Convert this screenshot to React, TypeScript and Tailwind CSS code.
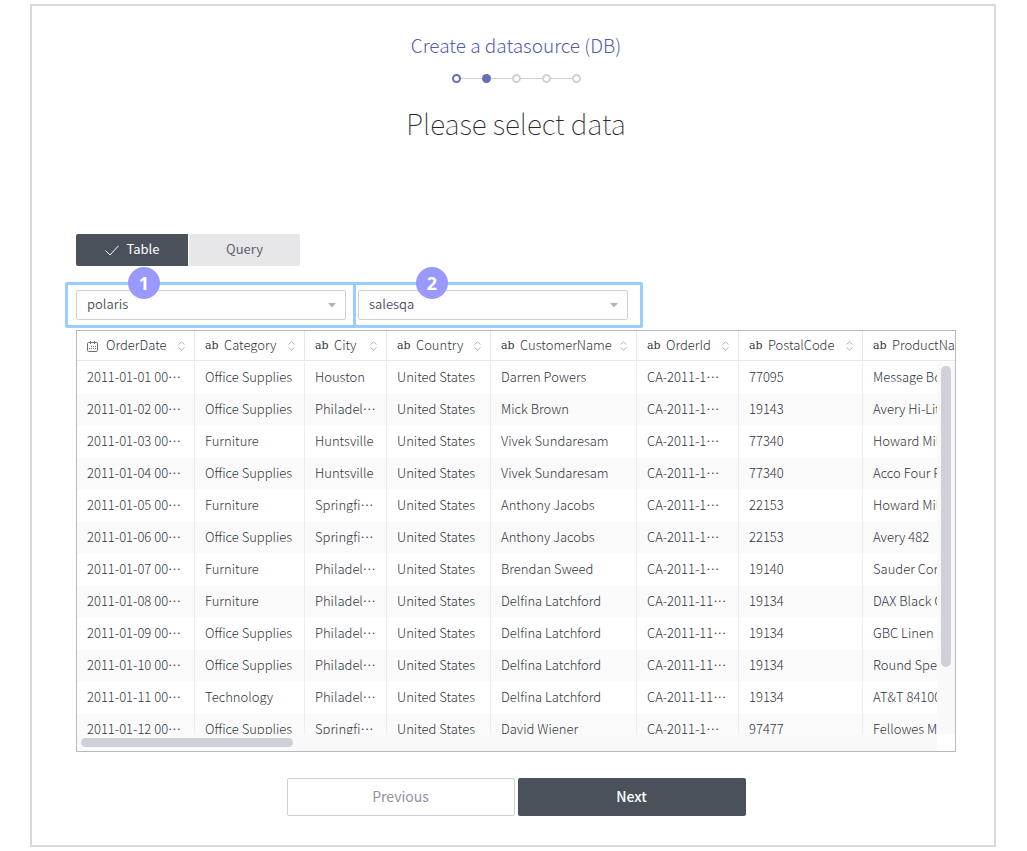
import { useState } from "react";
import type { ReactNode } from "react";

type Column = { name: string; kind: "date" | "text"; width: string };

const columns: Column[] = [
  { name: "OrderDate", kind: "date", width: "w-[118px]" },
  { name: "Category", kind: "text", width: "w-[110px]" },
  { name: "City", kind: "text", width: "w-[82px]" },
  { name: "Country", kind: "text", width: "w-[104px]" },
  { name: "CustomerName", kind: "text", width: "w-[146px]" },
  { name: "OrderId", kind: "text", width: "w-[102px]" },
  { name: "PostalCode", kind: "text", width: "w-[124px]" },
  { name: "ProductName", kind: "text", width: "w-[130px]" },
];

const US = "United States";
const MORE = "\u22ef";
const PHILADELPHIA = `Philadel${MORE}`;
const SPRINGFIELD = `Springfi${MORE}`;
const ORDER_1 = `CA-2011-1${MORE}`;
const ORDER_11 = `CA-2011-11${MORE}`;

const rows: string[][] = [
  ["2011-01-01", "Office Supplies", "Houston", US, "Darren Powers", ORDER_1, "77095", "Message Book"],
  ["2011-01-02", "Office Supplies", PHILADELPHIA, US, "Mick Brown", ORDER_1, "19143", "Avery Hi-Liter"],
  ["2011-01-03", "Furniture", "Huntsville", US, "Vivek Sundaresam", ORDER_1, "77340", "Howard Miller"],
  ["2011-01-04", "Office Supplies", "Huntsville", US, "Vivek Sundaresam", ORDER_1, "77340", "Acco Four Pocket"],
  ["2011-01-05", "Furniture", SPRINGFIELD, US, "Anthony Jacobs", ORDER_1, "22153", "Howard Miller"],
  ["2011-01-06", "Office Supplies", SPRINGFIELD, US, "Anthony Jacobs", ORDER_1, "22153", "Avery 482"],
  ["2011-01-07", "Furniture", PHILADELPHIA, US, "Brendan Sweed", ORDER_1, "19140", "Sauder Cornerstone"],
  ["2011-01-08", "Furniture", PHILADELPHIA, US, "Delfina Latchford", ORDER_11, "19134", "DAX Black Cherry"],
  ["2011-01-09", "Office Supplies", PHILADELPHIA, US, "Delfina Latchford", ORDER_11, "19134", "GBC Linen Binding"],
  ["2011-01-10", "Office Supplies", PHILADELPHIA, US, "Delfina Latchford", ORDER_11, "19134", "Round Specialty"],
  ["2011-01-11", "Technology", PHILADELPHIA, US, "Delfina Latchford", ORDER_11, "19134", "AT&T 841000"],
  ["2011-01-12", "Office Supplies", SPRINGFIELD, US, "David Wiener", ORDER_1, "97477", "Fellowes Mighty"],
].map(([date, ...rest]) => [`${date} 00${MORE}`, ...rest]);

function CalendarIcon() {
  return (
    <svg width="11" height="11" viewBox="0 0 11 11" fill="none" stroke="#6b7079" aria-hidden="true" className="mt-1 mr-px shrink-0">
      <rect x="0.5" y="1.5" width="10" height="9" rx="1" />
      <path d="M3.5 0v3M7.5 0v3" />
      <path d="M4 5.5h1M6 5.5h1M8 5.5h1M2 7.5h1M4 7.5h1M6 7.5h1M8 7.5h1" />
    </svg>
  );
}

function SortIcon() {
  return (
    <svg width="7" height="10" viewBox="0 0 7 10" fill="none" stroke="#b2b3bd" aria-hidden="true" className="mt-0.5 shrink-0">
      <path d="M0.5 3.5 3.5 0.8 6.5 3.5M0.5 6.5 3.5 9.2 6.5 6.5" />
    </svg>
  );
}

function CellText({ value }: { value: string }) {
  if (!value.endsWith(MORE)) return <>{value}</>;
  return (
    <>
      {value.slice(0, -1)}
      <span className="inline-block font-['Noto_Sans_CJK_JP',sans-serif]" lang="ja">
        {MORE}
      </span>
    </>
  );
}

function Stepper({ current }: { current: number }) {
  return (
    <ol className="mt-[17px] flex items-center justify-center" aria-label="Progress">
      {[0, 1, 2, 3, 4].map((step) => (
        <li key={step} className="flex items-center">
          {step > 0 && <span className="h-px w-[21px] bg-[#d0d1d8]" />}
          <span
            className={
              step < current
                ? "size-[9px] rounded-full border-2 border-[#666eb2]"
                : step === current
                  ? "size-[9px] rounded-full bg-[#666eb2]"
                  : "size-[9px] rounded-full border-2 border-[#d0d1d8]"
            }
          />
        </li>
      ))}
    </ol>
  );
}

function Badge({ children }: { children: ReactNode }) {
  return (
    <span className="absolute -top-[18px] left-[60px] flex size-8 items-center justify-center rounded-full bg-[#9999ff] font-['Open_Sans',sans-serif] text-lg font-bold text-white">
      {children}
    </span>
  );
}

function Picker({ label, value }: { label: string; value: string }) {
  return (
    <div className="relative w-[270px]">
      <select
        aria-label={label}
        defaultValue={value}
        className="block h-[30px] w-full appearance-none rounded-xs border border-[#d0d1d8] bg-white pr-8 pb-0.5 pl-2.5 text-[13px] font-[350] text-[#4b515b]"
      >
        <option>{value}</option>
      </select>
      <svg width="8" height="5" viewBox="0 0 8 5" aria-hidden="true" className="pointer-events-none absolute top-[13px] right-2.5">
        <path d="M0 0h8L4 4.5z" fill="#b2b3bd" />
      </svg>
    </div>
  );
}

export default function App() {
  const [tab, setTab] = useState("table");
  return (
    <div className="pt-1 pr-[31px] pb-1 pl-[30px] font-['Noto_Sans_CJK_KR',sans-serif] text-[#4b515b]">
      <main className="border-2 border-[#d9d9d9] bg-white pt-[27px] pr-[38px] pb-[29px] pl-[44px]">
        <header className="text-center">
          <p className="text-[19px] leading-[24px] font-light text-[#545da8]">Create a datasource (DB)</p>
          <Stepper current={1} />
          <h1 className="mt-5 text-[28px] leading-[40px] font-thin text-[#25282d]">Please select data</h1>
        </header>

        <div className="mt-[91px] flex gap-px text-[13px]" role="tablist">
          <button
            role="tab"
            aria-selected={tab === "table"}
            onClick={() => setTab("table")}
            className="flex h-8 w-[112px] items-center justify-center gap-2 rounded-l-xs bg-[#4b515b] pb-0.5 text-white"
          >
            <svg width="14" height="11" viewBox="0 0 14 11" fill="none" stroke="currentColor" aria-hidden="true" className="mt-0.5">
              <path d="M0.5 5.5 5 10 13.5 0.8" />
            </svg>
            Table
          </button>
          <button
            role="tab"
            aria-selected={tab === "query"}
            onClick={() => setTab("query")}
            className="h-8 w-[111px] rounded-r-xs bg-[#e7e7ea] pb-0.5 text-[#5c616b]"
          >
            Query
          </button>
        </div>

        <div className="mt-4 -ml-[11px] flex">
          <div className="relative rounded-xs border-3 border-[#99ccff] py-[5px] pr-[7px] pl-2">
            <Picker label="Database" value="polaris" />
            <Badge>1</Badge>
          </div>
          <div className="relative -ml-[3px] rounded-xs border-3 border-[#99ccff] py-[5px] pr-3 pl-0.5">
            <Picker label="Table" value="salesqa" />
            <Badge>2</Badge>
          </div>
        </div>

        <section className="relative mt-0.5 h-[422px] overflow-hidden border border-[#b7b9c2]">
          <table className="w-[916px] min-w-full table-fixed border-separate border-spacing-0 text-left text-[13px] font-light text-[#30353d]">
            <thead>
              <tr>
                {columns.map((c) => (
                  <th key={c.name} className={`${c.width} h-[31px] p-0 align-top font-light`}>
                    <div className="flex h-[30px] items-center border-r border-b border-[#e7e7ea] pr-[9px] pb-0.5 pl-2.5">
                      {c.kind === "date" ? (
                        <CalendarIcon />
                      ) : (
                        <span className="mt-[3px] w-3.5 shrink-0 font-['DejaVu_Serif',serif] text-[11px] leading-4 font-normal">ab</span>
                      )}
                      <span className={c.kind === "date" ? "ml-[7px] flex-1 leading-5" : "ml-[5px] flex-1 leading-5"}>{c.name}</span>
                      <SortIcon />
                    </div>
                  </th>
                ))}
              </tr>
            </thead>
            <tbody>
              {rows.map((row) => (
                <tr key={row[0]} className="even:bg-[#fafafa]">
                  {row.map((cell, i) => (
                    <td key={i} className="h-8 overflow-hidden border-r border-[#ededf0] pb-0.5 pl-2.5 whitespace-nowrap">
                      <CellText value={cell} />
                    </td>
                  ))}
                </tr>
              ))}
            </tbody>
          </table>
          <div className="absolute top-[31px] right-0 bottom-[17px] w-[18px] bg-[#f9f9f9] px-1 pt-1">
            <div className="h-[301px] rounded-full bg-[#d0d1d8]" />
          </div>
          <div className="absolute right-0 bottom-0 left-0 flex h-[17px] bg-white">
            <div className="flex-1 bg-[#f9f9f9] p-1">
              <div className="h-[9px] w-[212px] rounded-full bg-[#d0d1d8]" />
            </div>
            <div className="w-[18px]" />
          </div>
        </section>

        <footer className="mt-[26px] flex justify-center gap-[3px] text-sm">
          <button className="h-[38px] w-[228px] rounded-xs border border-[#d0d1d8] bg-white pb-0.5 font-normal text-[#90949f]">Previous</button>
          <button className="h-[38px] w-[228px] rounded-xs bg-[#4b515b] pb-0.5 font-medium text-white">Next</button>
        </footer>
      </main>
    </div>
  );
}
